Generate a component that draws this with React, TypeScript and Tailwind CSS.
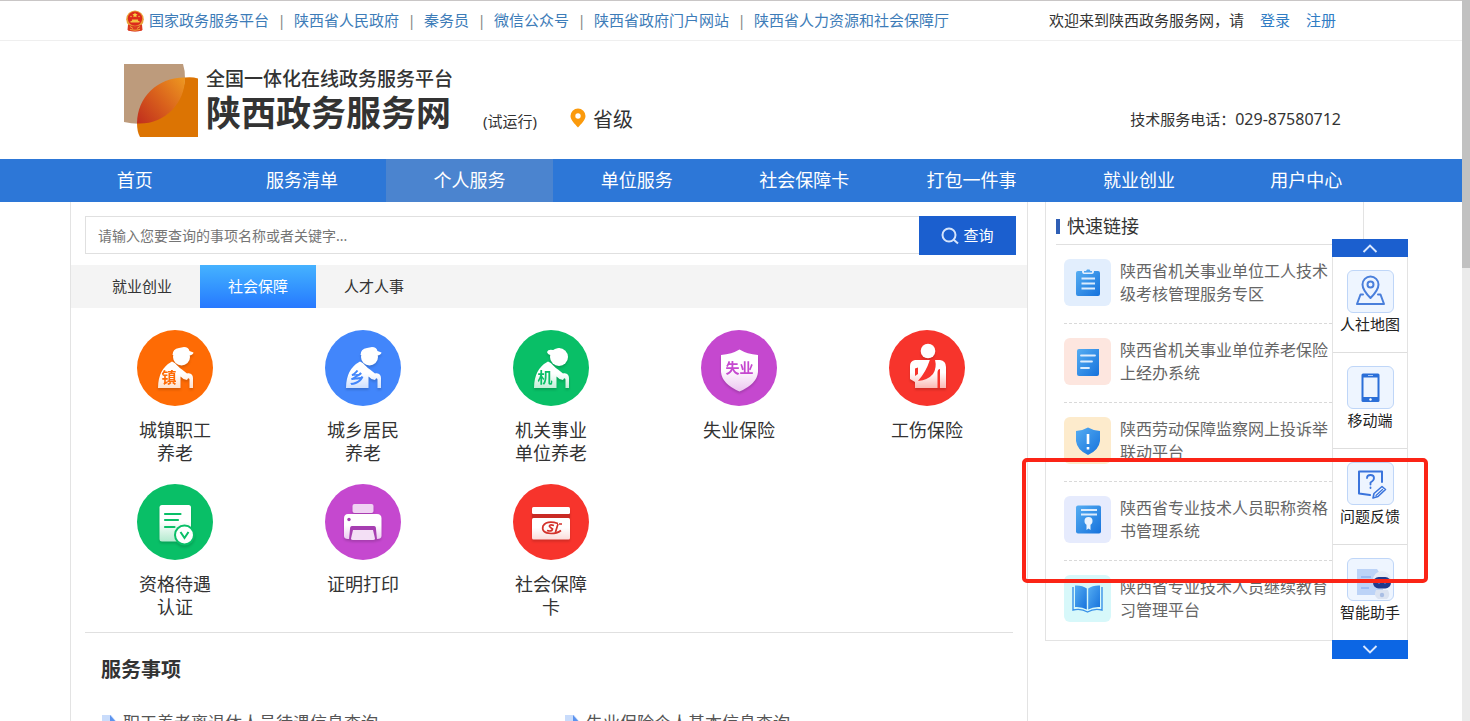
import React from "react";

const topLinks = [
  "国家政务服务平台",
  "陕西省人民政府",
  "秦务员",
  "微信公众号",
  "陕西省政府门户网站",
  "陕西省人力资源和社会保障厅",
];

const navItems = ["首页", "服务清单", "个人服务", "单位服务", "社会保障卡", "打包一件事", "就业创业", "用户中心"];

function Emblem() {
  return (
    <svg viewBox="0 0 18 22" className="h-[22px] w-[18px]" aria-hidden="true">
      <path d="M2.5 15.5 L15.5 15.5 L16 20.5 Q9 22.5 2 20.5 Z" fill="#d8321f" />
      <circle cx="9" cy="9.2" r="8.8" fill="#e9a23a" />
      <circle cx="9" cy="8.6" r="7.2" fill="#dc2a1c" />
      <path d="M9 2.4l.8 1.7 1.8.2-1.3 1.2.3 1.8L9 6.4l-1.6.9.3-1.8-1.3-1.2 1.8-.2z" fill="#f7cf45" />
      <circle cx="5" cy="6.5" r=".7" fill="#f7cf45" />
      <circle cx="13" cy="6.5" r=".7" fill="#f7cf45" />
      <path d="M4.500 12.500h9v-1.600h-1.400V9.600H5.900v1.300H4.500z" fill="#f4c040" />
      <path d="M2 14.500Q9 18 16 14.500L16.500 20Q9 22.500 1.500 20Z" fill="#dc3a20" />
      <path d="M4 19.500Q9 21 14 19.500M4 16.500L7 18.500M14 16.500L11 18.500" stroke="#f4c040" strokeWidth=".8" fill="none" />
    </svg>
  );
}

function Logo() {
  return (
    <svg viewBox="0 0 74 73" className="h-[73px] w-[74px]" aria-hidden="true">
      <defs>
        <linearGradient id="petal" x1="0" y1="0.9" x2="1" y2="0.1">
          <stop offset="0" stopColor="#c2311d" />
          <stop offset="0.5" stopColor="#d9611c" />
          <stop offset="1" stopColor="#ec9420" />
        </linearGradient>
      </defs>
      <path d="M0 0H59Q61 6 61 14Q58 48 24 59Q12 61 0 58Z" fill="#bd9b7c" />
      <path d="M61 13.500Q68 12.500 74 14.500V73H16Q13 68 13 59Q40 58 52 40Q60 28 61 13.500Z" fill="#dc7403" />
      <path d="M61 13.500C34 13 13 33 13 59.500C40 61 61 40 61 13.500Z" fill="url(#petal)" />
    </svg>
  );
}

function Fade({ id, to }: { id: string; to: string }) {
  return (
    <defs>
      <linearGradient id={id} x1="0" y1="0" x2="0" y2="1">
        <stop offset="0.45" stopColor="#ffffff" />
        <stop offset="1" stopColor={to} />
      </linearGradient>
    </defs>
  );
}

const iconText = {
  fontFamily: '"Noto Sans CJK SC", sans-serif',
  fontWeight: 700,
};

function Elder({ id, mark, color, tint, bun }: { id: string; mark: string; color: string; tint: string; bun?: boolean }) {
  return (
    <>
      <Fade id={id} to={tint} />
      {bun ? (
        <>
          <circle cx="46" cy="27" r="9" fill="#fff" />
          <path d="M34 22Q35 19 40 20L47 18L44 30Q38 28 38 25Q35 25 34 22Z" fill="#fff" />
        </>
      ) : (
        <>
          <circle cx="44.500" cy="27" r="8.500" fill="#fff" />
          <path d="M35.500 25Q35.500 19 42 18L47 17Q51.500 17 52.500 21L56.500 22.500Q56 25 52 25.500Z" fill="#fff" />
        </>
      )}
      <path
        d="M35 31.500C39 33 41 37 45 39.500L50 43.500C54 42.500 56 45 56 48V58H52.500V49.500Q51.500 47 50 50L46.500 49L43.500 46.500V58H21Q21 39 35 31.500Z"
        fill={"url(#" + id + ")"}
      />
      <text x="32" y="53" fontSize="15" textAnchor="middle" fill={color} style={iconText}>
        {mark}
      </text>
    </>
  );
}

function ShieldIcon() {
  return (
    <>
      <Fade id="f-shield" to="#ecc6f0" />
      <path d="M38.500 19.500Q46 24 57 25V42Q56 54 38.500 61.500Q21 54 20 42V25Q31 24 38.500 19.500Z" fill="url(#f-shield)" />
      <text x="38.500" y="43" fontSize="14" textAnchor="middle" fill="#c548cf" style={iconText}>
        失业
      </text>
    </>
  );
}

function InjuryIcon() {
  return (
    <>
      <Fade id="f-injury" to="#fbb9b4" />
      <circle cx="39" cy="21" r="7.300" fill="#fff" />
      <path d="M26 30H51Q57 31 57 37V58H26V52L21 49V36Q21 31 26 30Z" fill="url(#f-injury)" />
      <path d="M41 29.500H46Q48 38 44 44Q39 50 29 51Q37 42 41 29.500Z" fill="#f7342c" />
      <path d="M26 38.500L29 37.500V44L26 46Z" fill="#f7342c" />
      <path d="M48.500 58V43Q48.500 39 51 39V58Z" fill="#f7342c" />
    </>
  );
}

function CertifyIcon() {
  return (
    <>
      <Fade id="f-certify" to="#b4eacf" />
      <rect x="22.500" y="21" width="31.500" height="36.500" rx="2.500" fill="url(#f-certify)" />
      <path d="M28 30H43.500M28 36H41M28 43H37.500" stroke="#09bf67" strokeWidth="2.200" strokeLinecap="round" />
      <circle cx="47.500" cy="51" r="10.500" fill="#09bf67" />
      <circle cx="47.500" cy="51" r="8.500" fill="#fff" />
      <path d="M43.500 48L47.500 54L51.500 48" stroke="#09bf67" strokeWidth="2" fill="none" />
    </>
  );
}

function PrintIcon() {
  return (
    <>
      <Fade id="f-print" to="#ecccf1" />
      <rect x="27.500" y="20" width="21" height="9" rx="2" fill="#f0d2f3" />
      <path d="M23 30H52Q56.500 30 56.500 34.500V52Q56.500 55 52 55H23Q19 55 19 52V34.500Q19 30 23 30Z" fill="url(#f-print)" />
      <path d="M27 42H49Q51 42 51 45L52 55.500H24L25 45Q25 42 27 42Z" fill="#a63eb1" />
      <path d="M28 46H48L50 54.500Q50 56 48 56H28Q26 56 26 54.500Z" fill="#f3dff5" />
      <circle cx="24" cy="35.500" r="1.700" fill="#a53ab2" />
    </>
  );
}

function CardIcon() {
  return (
    <>
      <Fade id="f-card" to="#fbdcda" />
      <rect x="19" y="23" width="38" height="7" rx="1.500" fill="#fff" />
      <rect x="19" y="30" width="38" height="4" fill="#c92a24" />
      <rect x="19" y="34" width="38" height="21.500" rx="1.500" fill="url(#f-card)" />
      <path d="M45 39.500Q34 36 30 42Q28 49 38 49.500Q44 49.500 48 46.500" stroke="#d3322b" strokeWidth="1.700" fill="none" />
      <path d="M41 41.500Q36 40 36.500 42.500Q38 44 39.500 45Q39 48 34 46.500" stroke="#d3322b" strokeWidth="1.700" fill="none" />
      <path d="M45 40L42.500 48M46 40H49" stroke="#d3322b" strokeWidth="1.700" fill="none" />
    </>
  );
}

const services = [
  { label: "城镇职工养老", bg: "bg-[#fe6b05]", icon: <Elder id="f-town" mark="镇" color="#fe6b05" tint="#ffe0cb" /> },
  { label: "城乡居民养老", bg: "bg-[#4286fb]", icon: <Elder id="f-rural" mark="乡" color="#4286fb" tint="#cfe0fe" /> },
  { label: "机关事业单位养老", bg: "bg-[#09bf67]", icon: <Elder id="f-office" mark="机" color="#09bf67" tint="#c3eed8" bun /> },
  { label: "失业保险", bg: "bg-[#c548cf]", icon: <ShieldIcon /> },
  { label: "工伤保险", bg: "bg-[#f7342c]", icon: <InjuryIcon /> },
  { label: "资格待遇认证", bg: "bg-[#09bf67]", icon: <CertifyIcon /> },
  { label: "证明打印", bg: "bg-[#c548cf]", icon: <PrintIcon /> },
  { label: "社会保障卡", bg: "bg-[#f7342c]", icon: <CardIcon /> },
];

const quickLinks = [
  {
    label: "陕西省机关事业单位工人技术级考核管理服务专区",
    bg: "bg-[#e2eefd]",
    icon: (
      <>
        <path d="M14 12H18Q18 15 20 15H28Q30 15 30 12H34Q36 12 36 14V35Q36 37 34 37H14Q12 37 12 35V14Q12 12 14 12Z" fill="url(#quick)" />
        <path d="M20 13.500V12H22L23 10.500H25.500L26.500 12H28V13.500Z" fill="#4fa3ee" />
        <path d="M17.500 19.500H31M17.500 24.500H31M17.500 29.500H31" stroke="#dcecfd" strokeWidth="1.800" />
      </>
    ),
  },
  {
    label: "陕西省机关事业单位养老保险上经办系统",
    bg: "bg-[#fde6df]",
    icon: (
      <>
        <path d="M15 11H35V36Q35 38 33 38H15Q13 38 13 36V13Q13 11 15 11Z" fill="url(#quick)" />
        <path d="M17 17.500H31M17 23.500H28M17 30H25" stroke="#dcecfd" strokeWidth="1.800" strokeLinecap="round" />
      </>
    ),
  },
  {
    label: "陕西劳动保障监察网上投诉举联动平台",
    bg: "bg-[#fdebcc]",
    icon: (
      <>
        <path d="M24 10.500Q29 13.500 36 14V24Q35 33 24 38Q13 33 12 24V14Q19 13.500 24 10.500Z" fill="url(#quick)" />
        <path d="M24 17V27M24 30V32.500" stroke="#fff" strokeWidth="2.600" />
      </>
    ),
  },
  {
    label: "陕西省专业技术人员职称资格书管理系统",
    bg: "bg-[#e6ebfd]",
    icon: (
      <>
        <rect x="12" y="9.500" width="25" height="28" rx="2" fill="url(#quick)" />
        <path d="M17 14H33M17 18.500H33" stroke="#dcecfd" strokeWidth="1.800" />
        <circle cx="24.500" cy="25" r="4" fill="#e9f3ff" />
        <path d="M22.500 27V34L24.500 32.500L26.500 34V27Z" fill="#e9f3ff" />
      </>
    ),
  },
  {
    label: "陕西省专业技术人员继续教育习管理平台",
    bg: "bg-[#d7f8fa]",
    icon: (
      <>
        <path d="M9 12V35Q17 33 23.500 37Q30 33 38 35V12" fill="none" stroke="#3a92e8" strokeWidth="1.400" />
        <path d="M11 10.500Q18 10 22.800 13.500V34.500Q18 31.500 11 32Z" fill="url(#quick)" />
        <path d="M36 10.500Q29 10 24.200 13.500V34.500Q29 31.500 36 32Z" fill="url(#quick)" />
      </>
    ),
  },
];

const floatItems = [
  {
    label: "人社地图",
    icon: (
      <g fill="none" stroke="#4a7fdb" strokeWidth="2" strokeLinejoin="round" strokeLinecap="round">
        <path d="M23.500 28Q15.500 20 15.500 14.500A8 8 0 0 1 31.500 14.500Q31.500 20 23.500 28Z" />
        <circle cx="23.500" cy="14.500" r="3" />
        <path d="M16 24.500H13.500L10 34H37L33.500 24.500H31" />
      </g>
    ),
  },
  {
    label: "移动端",
    icon: (
      <>
        <rect x="14.500" y="7.500" width="18" height="28.500" rx="1.500" fill="#2b6fd8" />
        <rect x="16.500" y="11.500" width="14" height="19.500" fill="#eef5ff" />
        <circle cx="23.500" cy="33.500" r="1.200" fill="#fff" />
        <path d="M21 9.500H26" stroke="#a9c8f6" strokeWidth="1" />
      </>
    ),
  },
  {
    label: "问题反馈",
    icon: (
      <g fill="none" stroke="#3a74dc" strokeWidth="2" strokeLinejoin="round" strokeLinecap="round">
        <path d="M23 33L12 31.500V9.500H35V20" />
        <path d="M20 16Q20 13 23.500 13Q27 13 27 16Q27 18.500 23.500 20.500V22.500M23.500 25.500V26" strokeWidth="1.800" />
        <path d="M26 36L27 31.500L35 24.500L38.500 27.500L31 34.500Z" strokeWidth="1.600" />
        <path d="M29 33.500L35.500 27.500" strokeWidth="1.200" />
      </g>
    ),
  },
  {
    label: "智能助手",
    icon: (
      <>
        <path d="M10 11H30L36 20V37H10Z" fill="#bcd3f7" />
        <path d="M14 19H24M14 24H24M14 30H22" stroke="#8eb3ef" strokeWidth="1.600" />
        <circle cx="35" cy="22" r="9" fill="#e6ecf6" />
        <rect x="26" y="19" width="18" height="11.500" rx="5.700" fill="#1f3a8c" />
        <path d="M31 24.500H33M37 24.500H39" stroke="#5f8cf0" strokeWidth="1.800" />
        <path d="M29 32H41Q44 38 40 41H31Q26 38 29 32Z" fill="#dbe3f1" />
        <circle cx="35" cy="37" r="2.200" fill="#a9bee4" />
      </>
    ),
  },
];

const matters = ["职工养老离退休人员待遇信息查询", "失业保险个人基本信息查询"];

function Chevron({ up }: { up?: boolean }) {
  return (
    <svg viewBox="0 0 16 9" className="h-[9px] w-4" aria-hidden="true">
      <path d={up ? "M1.500 8L8 1.500L14.500 8" : "M1.500 1L8 7.500L14.500 1"} fill="none" stroke="#dbe9ff" strokeWidth="1.900" />
    </svg>
  );
}

export default function App() {
  return (
    <div className="relative flex h-screen overflow-hidden bg-white font-['Noto_Sans','Noto_Sans_CJK_SC',sans-serif] text-[15px] text-[#333]">
      <div className="min-w-0 flex-1 overflow-hidden">
        <div className="flex items-center justify-between border-t border-b border-t-[#c9c6c6] border-b-[#efefef] pr-[126px] pl-[126px] leading-[39px]">
          <div className="flex items-center whitespace-nowrap">
            <Emblem />
            <nav aria-label="相关网站" className="ml-[5px] flex gap-2">
              {topLinks.map((label, i) => (
                <React.Fragment key={label}>
                  {i > 0 && <span className="w-[9px] text-center text-[#888]">|</span>}
                  <a href="#" className="text-[#3d7cb8]">
                    {label}
                  </a>
                </React.Fragment>
              ))}
            </nav>
          </div>
          <div className="flex gap-4 whitespace-nowrap">
            <span>欢迎来到陕西政务服务网，请</span>
            <a href="#" className="text-[#2f7cc4]">登录</a>
            <a href="#" className="text-[#2f7cc4]">注册</a>
          </div>
        </div>

        <header className="flex h-[118px] items-start justify-between pr-[121px] pl-[124px] whitespace-nowrap">
          <div className="flex">
            <a href="#" className="flex pt-[23px]">
              <Logo />
              <span className="ml-2 flex flex-col pt-[3px]">
                <span className="text-[19px] leading-6 font-medium">全国一体化在线政务服务平台</span>
                <span className="text-[35px] leading-[44px] font-bold">陕西政务服务网</span>
              </span>
            </a>
            <span className="ml-[30px] pt-[69px] leading-[22px]">(试运行)</span>
            <button type="button" className="ml-[33px] flex items-start gap-[7px] self-start pt-16 text-[20px] leading-[30px]">
              <svg viewBox="0 0 16 20" className="mt-[3px] h-5 w-4" aria-hidden="true">
                <path d="M8 .5A7.500 7.500 0 0 0 .5 8C.5 12 5 16 8 19.500C11 16 15.500 12 15.500 8A7.500 7.500 0 0 0 8 .5Z" fill="#fb9a0c" />
                <circle cx="8" cy="8" r="2.700" fill="#fff" />
              </svg>
              省级
            </button>
          </div>
          <p className="pt-[67px] leading-[22px]">
            技术服务电话：<span className="text-[16px]">029-87580712</span>
          </p>
        </header>

        <nav aria-label="主导航" className="grid grid-cols-8 bg-[#2d77d7] pr-[72px] pl-[51px] text-center text-[18px] leading-[43px] whitespace-nowrap text-white">
          {navItems.map((label, i) => (
            <a key={label} href="#" className={i === 2 ? "bg-[#4b84cf]" : ""}>
              {label}
            </a>
          ))}
        </nav>

        <div className="flex items-start gap-[17px] pr-[98px] pl-[70px]">
          <main className="min-w-0 flex-1 border-x border-[#e3e3e3] pt-[14px]">
            <form className="flex pr-[11px] pl-[14px]" onSubmit={(e) => e.preventDefault()}>
              <input
                type="text"
                aria-label="查询事项"
                placeholder="请输入您要查询的事项名称或者关键字..."
                className="h-[38px] min-w-0 flex-1 border border-r-0 border-[#e0e0e0] px-3 text-[14px] outline-none placeholder:text-[#757575]"
              />
              <button type="submit" className="flex h-[39px] w-[97px] items-center justify-center gap-1 bg-[#1b5fcf] text-white">
                <svg viewBox="0 0 18 18" className="size-[18px]" fill="none" stroke="#d5e4fb" strokeWidth="2" aria-hidden="true">
                  <circle cx="8" cy="8" r="6.500" />
                  <path d="M12.500 12.500L17 16.500" />
                </svg>
                查询
              </button>
            </form>

            <div role="tablist" className="mt-[10px] flex bg-[#f4f4f4] pl-[13px] leading-[43px]">
              <button type="button" role="tab" aria-selected="false" className="w-[116px]">就业创业</button>
              <button type="button" role="tab" aria-selected="true" className="w-[116px] bg-linear-to-b from-[#46b2ff] to-[#2878ff] text-white">社会保障</button>
              <button type="button" role="tab" aria-selected="false" className="w-[116px]">人才人事</button>
            </div>

            <div className="grid grid-cols-5 gap-y-[19px] pt-[22px] pr-[6px] pl-[10px]">
              {services.map((s) => (
                <a key={s.label} href="#" className="flex flex-col items-center gap-[13px]">
                  <span className={"size-[76px] rounded-full " + s.bg}>
                    <svg viewBox="0 0 76 76" className="size-[76px] drop-shadow-[0_2px_1px_rgba(0,0,0,0.15)]" aria-hidden="true">
                      {s.icon}
                    </svg>
                  </span>
                  <span className="w-[76px] text-center text-[18px] leading-[23px]">{s.label}</span>
                </a>
              ))}
            </div>

            <section className="mt-[13px] mr-[14px] ml-[14px] border-t border-[#e0e0e0] pt-[22px] pl-4">
              <h2 className="text-[20px] leading-[30px] font-bold">服务事项</h2>
              <ul className="mt-[27px] -mr-[14px] grid grid-cols-2 pb-5 text-[17px] leading-[22px] text-[#555]">
                {matters.map((label) => (
                  <li key={label}>
                    <a href="#" className="flex items-center gap-[6px]">
                      <svg viewBox="0 0 16 18" className="h-[18px] w-4" aria-hidden="true">
                        <path d="M1 1H10L15 7V18H1Z" fill="#c9dcfb" />
                        <path d="M9 1L15 8H9Z" fill="#5b93ee" />
                      </svg>
                      {label}
                    </a>
                  </li>
                ))}
              </ul>
            </section>
          </main>

          <aside className="w-[319px] shrink-0 border border-t-0 border-[#e3e3e3] pb-[18px] pl-[10px]">
            <svg className="absolute size-0" aria-hidden="true">
              <defs>
                <linearGradient id="quick" x1="0" y1="0" x2="1" y2="1">
                  <stop offset="0" stopColor="#55adf2" />
                  <stop offset="1" stopColor="#1672dc" />
                </linearGradient>
              </defs>
            </svg>
            <h2 className="flex items-center gap-[7px] border-b border-[#e0e0e0] pt-[10px] pb-1 text-[18px] leading-7">
              <span className="h-[15px] w-1 bg-[#2f5fb5]" />
              快速链接
            </h2>
            <ul className="pr-4 pl-2">
              {quickLinks.map((q, i) => (
                <li key={q.label} className={i < 4 ? "border-b border-dashed border-[#d9d9d9] pt-[14px] pb-[17px]" : "pt-[14px]"}>
                  <a href="#" className="flex gap-[9px] text-[16px] leading-[23px] text-[#666]">
                    <svg viewBox="0 0 47 47" className={"size-[47px] shrink-0 rounded-md " + q.bg} aria-hidden="true">
                      {q.icon}
                    </svg>
                    <span className="flex-1 pt-px pr-4">{q.label}</span>
                  </a>
                </li>
              ))}
            </ul>
          </aside>
        </div>
      </div>

      <div className="w-2 shrink-0 bg-[#ebebeb]" aria-hidden="true">
        <div className="h-[268px] bg-[#c1c1c1]" />
      </div>

      <div className="absolute top-[239px] right-[62px] w-[76px] bg-white text-[#222]">
        <button type="button" aria-label="向上" className="flex h-[18px] w-full items-center justify-center bg-[#1b5fcf]">
          <Chevron up />
        </button>
        <ul className="border-x border-[#e3e3e3]">
          {floatItems.map((f, i) => (
            <li key={f.label} className={i < 3 ? "border-b border-[#dedede] pt-[13px] pb-[17px]" : "pt-[13px] pb-[17px]"}>
              <a href="#" className="flex flex-col items-center leading-[22px] whitespace-nowrap">
                <svg viewBox="1 1 45 41" className="h-[43px] w-[47px] rounded-md border border-[#bfd6f8] bg-[#eef5ff]" aria-hidden="true">
                  {f.icon}
                </svg>
                {f.label}
              </a>
            </li>
          ))}
        </ul>
        <button type="button" aria-label="向下" className="flex h-[19px] w-full items-center justify-center bg-[#0c66e4]">
          <Chevron />
        </button>
      </div>

      <div className="pointer-events-none absolute top-[458px] right-[42px] h-[125px] w-[406px] rounded-[5px] border-4 border-[#fb2416]" aria-hidden="true" />
    </div>
  );
}
